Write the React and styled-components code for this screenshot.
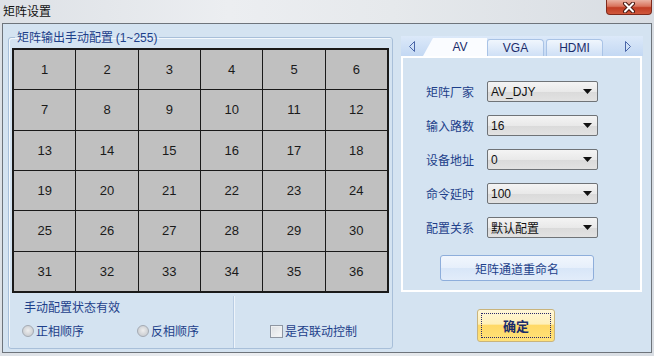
import React from "react";
import styled, { createGlobalStyle } from "styled-components";

const GlobalStyle = createGlobalStyle`
  html, body { margin: 0; padding: 0; background: #dfe3e8; }
  body { font-family: "Noto Sans CJK SC", "Liberation Sans", sans-serif; }
`;

const CJK = `"Noto Sans CJK SC", "Liberation Sans", sans-serif`;
const LATIN = `"Liberation Sans", "Noto Sans CJK SC", sans-serif`;

const Window = styled.div`
  width: 654px;
  height: 356px;
  box-sizing: border-box;
  background: linear-gradient(to right, #dde1e6 0%, #eceef1 35%, #e6e9ec 60%, #d8dde3 100%);
  display: flex;
  flex-direction: column;
`;

const TitleBar = styled.div`
  height: 23px;
  display: flex;
  justify-content: space-between;
  align-items: flex-start;
  padding-left: 3px;
`;

const Title = styled.span`
  font-family: ${CJK};
  font-size: 12px;
  line-height: 22px;
  color: #111;
`;

const CloseButton = styled.div`
  width: 46px;
  height: 15px;
  margin-right: 2px;
  box-sizing: border-box;
  border: 1px solid #7f2a1c;
  border-top: none;
  border-radius: 0 0 4px 4px;
  background: linear-gradient(#eab2a2 0%, #d9735c 45%, #c13d24 55%, #d0583c 100%);
  display: flex;
  align-items: center;
  justify-content: center;
`;

const Body = styled.div`
  flex: 1;
  margin: 0 2px 3px 2px;
  border: 1px solid #6e747b;
  background: #d4e3f1;
  display: flex;
  padding: 5px 0 0 5px;
  box-sizing: border-box;
`;

const GroupBox = styled.fieldset`
  margin: 0;
  padding: 0 0 0 3px;
  width: 385px;
  height: 320px;
  box-sizing: border-box;
  border: 1px solid #a8bfd9;
  border-radius: 3px;
  box-shadow: inset 1px 1px 0 #f4f8fc;
  display: flex;
  flex-direction: column;
`;

const Legend = styled.legend`
  margin-left: 3px;
  padding: 0 2px;
  font-family: ${CJK};
  font-size: 12px;
  line-height: 16px;
  color: #1d3f8a;
`;

const Range = styled.span`
  font-family: ${LATIN};
  font-size: 12px;
`;

const Grid = styled.div`
  margin-top: 2px;
  width: 377px;
  height: 245px;
  box-sizing: border-box;
  border: 2px solid #1a1a1a;
  background: #1a1a1a;
  display: grid;
  grid-template-columns: repeat(6, 1fr);
  grid-template-rows: repeat(6, 1fr);
  gap: 1px;
`;

const Cell = styled.div`
  background: #c0c0c0;
  display: flex;
  align-items: center;
  justify-content: center;
  font-family: ${LATIN};
  font-size: 13px;
  color: #1a1a1a;
`;

const Options = styled.div`
  flex: 1;
  display: flex;
  margin-left: -3px;
`;

const ModePane = styled.div`
  width: 224px;
  padding: 6px 0 0 15px;
  box-sizing: border-box;
`;

const Separator = styled.div`
  width: 1px;
  margin-top: 3px;
  background: #b9cde4;
  border-right: 1px solid #eef4fa;
`;

const LinkPane = styled.div`
  flex: 1;
  display: flex;
  align-items: flex-start;
  padding: 30px 0 0 35px;
`;

const Caption = styled.div`
  font-family: ${CJK};
  font-size: 12px;
  line-height: 16px;
  color: #1d3f8a;
`;

const RadioRow = styled.div`
  display: flex;
  margin-top: 8px;
  margin-left: -2px;
`;

const Choice = styled.label`
  display: flex;
  align-items: center;
  gap: 2px;
  width: ${(p) => p.width || "auto"};
  font-family: ${CJK};
  font-size: 12px;
  line-height: 16px;
  color: #1d3f8a;
`;

const RadioDot = styled.span`
  width: 12px;
  height: 12px;
  box-sizing: border-box;
  border-radius: 50%;
  border: 1px solid #a4aab3;
  background: radial-gradient(circle at 50% 45%, #eeeeee 0%, #d4d6d9 55%, #c4c8cd 100%);
`;

const CheckBox = styled.span`
  width: 13px;
  height: 13px;
  box-sizing: border-box;
  border: 1px solid #8e96a2;
  background: linear-gradient(135deg, #dcdfe3, #f7f8f9);
  box-shadow: inset 0 0 0 1px #eef0f2;
`;

const RightColumn = styled.div`
  margin: 7px 0 0 8px;
  width: 244px;
  display: flex;
  flex-direction: column;
`;

const TabStrip = styled.div`
  height: 20px;
  display: flex;
  align-items: flex-end;
  background: linear-gradient(#dce9f9, #c3d8f3);
  margin-right: 2px;
`;

const Arrow = styled.div`
  width: ${(p) => (p.right ? "auto" : "22px")};
  flex: ${(p) => (p.right ? 1 : "none")};
  align-self: center;
  display: flex;
  justify-content: ${(p) => (p.right ? "flex-end" : "center")};
  padding-right: ${(p) => (p.right ? "12px" : "0")};
`;

const Tab = styled.div`
  height: ${(p) => (p.active ? 18 : 17)}px;
  width: ${(p) => p.width}px;
  box-sizing: border-box;
  display: flex;
  align-items: center;
  justify-content: center;
  padding-left: ${(p) => (p.active ? 10 : 0)}px;
  margin-right: ${(p) => p.gap || 0}px;
  font-family: ${LATIN};
  font-size: 12px;
  color: #1b2c6b;
  background: ${(p) => (p.active ? "#fafcff" : "linear-gradient(#f0f6fd, #cfe0f6)")};
  border: ${(p) => (p.active ? "none" : "1px solid #a9c3e6")};
  border-bottom: none;
  border-radius: ${(p) => (p.active ? "0" : "3px 4px 0 0")};
  clip-path: ${(p) => (p.active ? "polygon(10px 0, 100% 0, 100% 100%, 0 100%)" : "none")};
`;

const TabPanel = styled.div`
  height: 236px;
  width: 241px;
  box-sizing: border-box;
  border: 2px solid #ffffff;
  background: #d4e3f1;
  padding: 23px 0 0 23px;
  display: flex;
  flex-direction: column;
  gap: 13px;
`;

const FormRow = styled.div`
  display: flex;
  align-items: center;
  height: 21px;
`;

const FieldLabel = styled.span`
  width: 61px;
  font-family: ${CJK};
  font-size: 12px;
  color: #1d3f8a;
`;

const Select = styled.div`
  width: 111px;
  height: 21px;
  box-sizing: border-box;
  border: 1px solid #6f7377;
  border-radius: 2px;
  background: linear-gradient(#f4f4f4 0%, #e9e9e9 50%, #dadada 51%, #e2e2e2 100%);
  display: flex;
  align-items: center;
  justify-content: space-between;
  padding: 0 5px 0 3px;
  font-family: ${(p) => (p.cjk ? CJK : LATIN)};
  font-size: 12px;
  color: #111;
`;

const RenameButton = styled.div`
  margin: 4px 0 0 14px;
  width: 154px;
  height: 26px;
  box-sizing: border-box;
  border: 1px solid #8eaedb;
  border-radius: 3px;
  background: linear-gradient(#f1f6fd 0%, #e6effb 50%, #d8e6f8 51%, #e2ecfa 100%);
  display: flex;
  align-items: center;
  justify-content: center;
  font-family: ${CJK};
  font-size: 12px;
  color: #1d3f8a;
`;

const OkButton = styled.div`
  margin: 17px 0 0 76px;
  width: 78px;
  height: 33px;
  box-sizing: border-box;
  border: 1px solid #c9b47c;
  border-radius: 3px;
  background: linear-gradient(#fff7d9 0%, #fff0b8 45%, #ffd966 50%, #ffe27a 100%);
  padding: 3px;
`;

const OkFocus = styled.div`
  height: 100%;
  box-sizing: border-box;
  border: 1px dotted #2a2a6a;
  display: flex;
  align-items: center;
  justify-content: center;
  font-family: ${CJK};
  font-size: 13px;
  font-weight: bold;
  color: #1b2c6b;
`;

const CaretDown = () => (
  <svg width="9" height="5" viewBox="0 0 9 5">
    <path d="M0 0h9L4.5 5z" fill="#111" />
  </svg>
);

const TriLeft = () => (
  <svg width="6" height="11" viewBox="0 0 6 11">
    <path d="M5.5 0.5v10L0.5 5.5z" fill="none" stroke="#4a66a8" strokeWidth="1" />
  </svg>
);

const TriRight = () => (
  <svg width="6" height="11" viewBox="0 0 6 11">
    <path d="M0.5 0.5v10l5-5z" fill="none" stroke="#4a66a8" strokeWidth="1" />
  </svg>
);

const fields = [
  { label: "矩阵厂家", value: "AV_DJY" },
  { label: "输入路数", value: "16" },
  { label: "设备地址", value: "0" },
  { label: "命令延时", value: "100" },
  { label: "配置关系", value: "默认配置", cjk: true },
];

export default function App() {
  const cells = Array.from({ length: 36 }, (_, i) => i + 1);

  return (
    <>
      <GlobalStyle />
      <Window>
        <TitleBar>
          <Title>矩阵设置</Title>
          <CloseButton>
            <svg width="14" height="11" viewBox="0 0 14 11">
              <path d="M3 1.5l8 8M11 1.5l-8 8" stroke="#4a1a12" strokeWidth="4" strokeLinecap="round" />
              <path d="M3 1.5l8 8M11 1.5l-8 8" stroke="#ffffff" strokeWidth="2" strokeLinecap="round" />
            </svg>
          </CloseButton>
        </TitleBar>
        <Body>
          <GroupBox>
            <Legend>
              矩阵输出手动配置 <Range>(1~255)</Range>
            </Legend>
            <Grid>
              {cells.map((n) => (
                <Cell key={n}>{n}</Cell>
              ))}
            </Grid>
            <Options>
              <ModePane>
                <Caption>手动配置状态有效</Caption>
                <RadioRow>
                  <Choice width="115px">
                    <RadioDot />
                    正相顺序
                  </Choice>
                  <Choice>
                    <RadioDot />
                    反相顺序
                  </Choice>
                </RadioRow>
              </ModePane>
              <Separator />
              <LinkPane>
                <Choice>
                  <CheckBox />
                  是否联动控制
                </Choice>
              </LinkPane>
            </Options>
          </GroupBox>
          <RightColumn>
            <TabStrip>
              <Arrow>
                <TriLeft />
              </Arrow>
              <Tab active width={64}>AV</Tab>
              <Tab width={57} gap={2}>VGA</Tab>
              <Tab width={57}>HDMI</Tab>
              <Arrow right>
                <TriRight />
              </Arrow>
            </TabStrip>
            <TabPanel>
              {fields.map((f) => (
                <FormRow key={f.label}>
                  <FieldLabel>{f.label}</FieldLabel>
                  <Select cjk={f.cjk}>
                    {f.value}
                    <CaretDown />
                  </Select>
                </FormRow>
              ))}
              <RenameButton>矩阵通道重命名</RenameButton>
            </TabPanel>
            <OkButton>
              <OkFocus>确定</OkFocus>
            </OkButton>
          </RightColumn>
        </Body>
      </Window>
    </>
  );
}
